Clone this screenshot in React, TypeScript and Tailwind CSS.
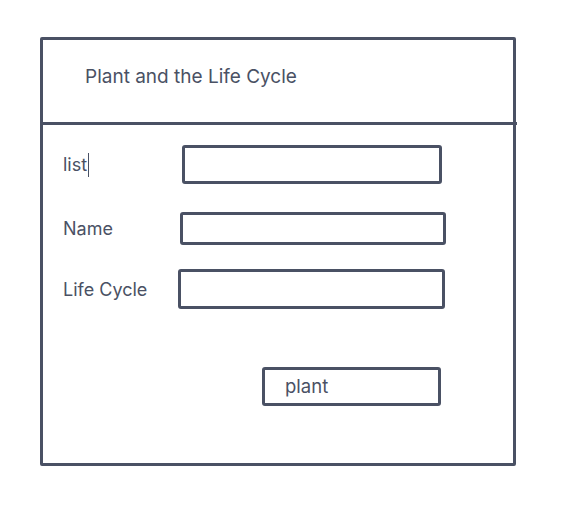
import React from 'react';

const ink = 'border-[#4a5164]';

function Field({ label, caret, inputClass, rowClass }: { label: string; caret?: boolean; inputClass: string; rowClass: string }) {
  return (
    <div className={`flex items-center ${rowClass}`}>
      <div className="w-[118px] shrink-0 pl-[20px] text-[18px] text-[#4a5164] flex items-center">
        <span>{label}</span>
        {caret && <span className="ml-[1px] inline-block h-[24px] w-[1px] bg-[#4a5164]" />}
      </div>
      <div className={`border-[3px] ${ink} rounded-[3px] bg-white ${inputClass}`} />
    </div>
  );
}

export default function App() {
  return (
    <div className="min-h-[518px] w-[571px] bg-white pl-[40px] pt-[37px]" style={{ fontFamily: 'Inter, "Liberation Sans", sans-serif' }}>
      <div className={`w-[476px] h-[429px] border-[3px] ${ink} rounded-[2px] flex flex-col`}>
        <div className={`h-[85px] border-b-[3px] ${ink} flex items-center pl-[42px] pb-[8px] -mr-[4px]`}>
          <h1 className="text-[19px] text-[#4a5164] font-normal">Plant and the Life Cycle</h1>
        </div>
        <div className="flex flex-col">
          <Field label="list" caret rowClass="mt-[20px]" inputClass="ml-[21px] w-[260px] h-[39px]" />
          <Field label="Name" rowClass="mt-[28px]" inputClass="ml-[19px] w-[266px] h-[33px]" />
          <Field label="Life Cycle" rowClass="mt-[24px]" inputClass="ml-[17px] w-[267px] h-[40px]" />
          <div className="mt-[58px] pl-[219px]">
            <button className={`w-[179px] h-[39px] border-[3px] ${ink} rounded-[3px] text-left pl-[20px] text-[18.5px] text-[#4a5164]`}>
              plant
            </button>
          </div>
        </div>
      </div>
    </div>
  );
}
